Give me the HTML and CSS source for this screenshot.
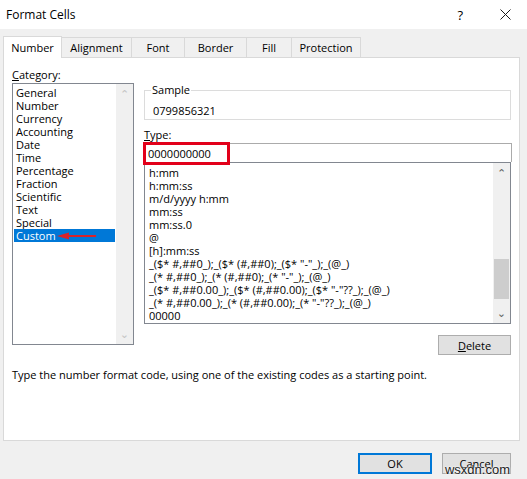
FILE: index.html
```html
<!DOCTYPE html>
<html lang="en">
<head>
    <meta charset="UTF-8">
    <title>Format Cells</title>
    <link rel="stylesheet" href="styles.css">
</head>
<body>
    <div class="dialog">
        <div class="titlebar">
            <span class="title">Format Cells</span>
            <span class="help">?</span>
            <span class="close">
                <svg width="11" height="11" viewBox="0 0 11 11"><path d="M0.5 0.5 L10.5 10.5 M10.5 0.5 L0.5 10.5" stroke="#1a1a1a" stroke-width="1" fill="none"/></svg>
            </span>
        </div>

        <div class="tabs">
            <div class="tab active">Number</div>
            <div class="tab">Alignment</div>
            <div class="tab">Font</div>
            <div class="tab">Border</div>
            <div class="tab">Fill</div>
            <div class="tab">Protection</div>
        </div>

        <div class="panel">
            <div class="columns">
                <div class="category">
                    <div class="field-label"><u>C</u>ategory:</div>
                    <div class="listbox category-list">
                        <ul class="items">
                            <li>General</li>
                            <li>Number</li>
                            <li>Currency</li>
                            <li>Accounting</li>
                            <li>Date</li>
                            <li>Time</li>
                            <li>Percentage</li>
                            <li>Fraction</li>
                            <li>Scientific</li>
                            <li>Text</li>
                            <li>Special</li>
                            <li class="selected">Custom
                                <svg class="pointer" width="40" height="8" viewBox="0 0 40 8"><path d="M0 4 L12 0.5 L12 3 L39 3 L39 5 L12 5 L12 7.5 Z" fill="#d8232a"/></svg>
                            </li>
                        </ul>
                        <div class="scrollbar disabled">
                            <span class="arrow">&#8963;</span>
                            <span class="track"></span>
                            <span class="arrow down">&#8963;</span>
                        </div>
                    </div>
                </div>

                <div class="details">
                    <fieldset class="sample">
                        <legend>Sample</legend>
                        <div class="sample-value">0799856321</div>
                    </fieldset>

                    <div class="field-label"><u>T</u>ype:</div>
                    <div class="type-field">
                        <input class="type-input" type="text" value="0000000000">
                        <span class="mark"></span>
                    </div>

                    <div class="listbox format-list">
                        <ul class="items codes">
                            <li>h:mm</li>
                            <li>h:mm:ss</li>
                            <li>m/d/yyyy h:mm</li>
                            <li>mm:ss</li>
                            <li>mm:ss.0</li>
                            <li>@</li>
                            <li>[h]:mm:ss</li>
                            <li>_($* #,##0_);_($* (#,##0);_($* "-"_);_(@_)</li>
                            <li>_(* #,##0_);_(* (#,##0);_(* "-"_);_(@_)</li>
                            <li>_($* #,##0.00_);_($* (#,##0.00);_($* "-"??_);_(@_)</li>
                            <li>_(* #,##0.00_);_(* (#,##0.00);_(* "-"??_);_(@_)</li>
                            <li>00000</li>
                        </ul>
                        <div class="scrollbar">
                            <span class="arrow">&#8963;</span>
                            <span class="track"><span class="thumb"></span></span>
                            <span class="arrow down">&#8963;</span>
                        </div>
                    </div>

                    <div class="actions">
                        <button class="btn"><u>D</u>elete</button>
                    </div>
                </div>
            </div>

            <p class="hint">Type the number format code, using one of the existing codes as a starting point.</p>
        </div>

        <div class="footer">
            <button class="btn default">OK</button>
            <button class="btn">Cancel</button>
        </div>

        <span class="watermark">wsxdn.com</span>
    </div>
</body>
</html>
```

FILE: styles.css
```css
body {
    margin: 0;
    font-family: "Open Sans", "Noto Sans", sans-serif;
    font-size: 11px;
    color: #000;
}

.dialog {
    position: relative;
    width: 527px;
    height: 479px;
    background: #f0f0f0;
    overflow: hidden;
}

/* title bar */
.titlebar {
    height: 29px;
    background: #fff;
    display: flex;
    align-items: center;
    padding: 0 16px 0 6px;
}

.title {
    flex: 1;
    font-size: 12px;
}

.help {
    font-size: 13px;
    margin-right: 37px;
}

.close {
    display: flex;
}

/* tabs */
.tabs {
    display: flex;
    padding: 8px 0 0 3px;
    height: 20px;
}

.tab {
    border: 1px solid #d9d9d9;
    border-bottom: none;
    border-left: none;
    line-height: 20px;
    text-align: center;
    box-sizing: border-box;
}

.tab:nth-child(1) { width: 59px; }
.tab:nth-child(2) { width: 70px; }
.tab:nth-child(3) { width: 53px; }
.tab:nth-child(4) { width: 62px; }
.tab:nth-child(5) { width: 45px; }
.tab:nth-child(6) { width: 69px; }

.tab.active {
    background: #fff;
    border-left: 1px solid #d9d9d9;
    margin-top: -1px;
    line-height: 22px;
    height: 22px;
    position: relative;
    z-index: 1;
}

.panel {
    margin: 0 7px 0 3px;
    background: #fff;
    border: 1px solid #d9d9d9;
    padding: 9px 7px 0 8px;
    box-sizing: border-box;
    height: 384px;
}

.columns {
    display: flex;
    gap: 10px;
}

.field-label {
    line-height: 16px;
}

/* list boxes */
.listbox {
    display: flex;
    border: 1px solid #828790;
    background: #fff;
}

.items {
    flex: 1;
    list-style: none;
    margin: 0;
    padding: 2px 1px;
}

.items li {
    height: 13px;
    line-height: 13px;
    padding-left: 2px;
    white-space: nowrap;
}

.items li.selected {
    background: #0078d7;
    color: #fff;
    position: relative;
}

.pointer {
    position: absolute;
    left: 43px;
    top: 3px;
}

.category-list {
    width: 120px;
    height: 260px;
}

.scrollbar {
    width: 17px;
    display: flex;
    flex-direction: column;
    background: #f0f0f0;
}

.scrollbar .arrow {
    height: 17px;
    line-height: 20px;
    text-align: center;
    font-size: 11px;
    color: #606060;
}

.scrollbar .arrow.down {
    transform: rotate(180deg);
}

.scrollbar.disabled .arrow {
    color: #c4c4c4;
}

.scrollbar .track {
    flex: 1;
    display: flex;
    flex-direction: column;
    justify-content: flex-end;
}

.thumb {
    height: 40px;
    margin: 0 1px 7px;
    background: #cdcdcd;
}

/* right column */
.details {
    width: 369px;
}

.sample {
    margin: 16px 1px 0 0;
    padding: 6px 8px 0;
    border: 1px solid #dcdcdc;
}

.sample legend {
    padding: 0 1px;
    margin-left: -2px;
    line-height: 14px;
}

.sample-value {
    line-height: 16px;
}

.details .field-label {
    margin-top: 7px;
}

.type-field {
    position: relative;
}

.type-input {
    display: block;
    width: 100%;
    box-sizing: border-box;
    height: 19px;
    margin: 0;
    padding: 0 3px;
    border: 1px solid #ababab;
    border-bottom: none;
    font: inherit;
    outline: none;
}

.mark {
    position: absolute;
    left: -1px;
    top: -1px;
    width: 81px;
    height: 17px;
    border: 3px solid #e2001a;
}

.format-list {
    height: 160px;
    margin-right: 1px;
}

.codes {
    padding: 3px 2px;
    overflow: hidden;
}

.actions {
    display: flex;
    justify-content: flex-end;
    margin: 11px 1px 0 0;
}

/* buttons */
.btn {
    font: inherit;
    color: #000;
    background: #e1e1e1;
    border: 1px solid #adadad;
    width: 73px;
    height: 20px;
    padding: 0;
}

.hint {
    margin: 13px 0 0;
    line-height: 14px;
}

.footer {
    display: flex;
    justify-content: flex-end;
    gap: 10px;
    padding: 12px 16px 0 0;
}

.footer .btn {
    height: 21px;
    width: 69px;
}

.footer .btn.default {
    width: 74px;
    border: 2px solid #0078d7;
}

.watermark {
    position: absolute;
    right: 17px;
    bottom: 2px;
    font-family: "Liberation Sans", sans-serif;
    font-size: 13px;
    color: #222;
    text-shadow: 0 0 2px #fff, 0 0 2px #fff;
}
```
